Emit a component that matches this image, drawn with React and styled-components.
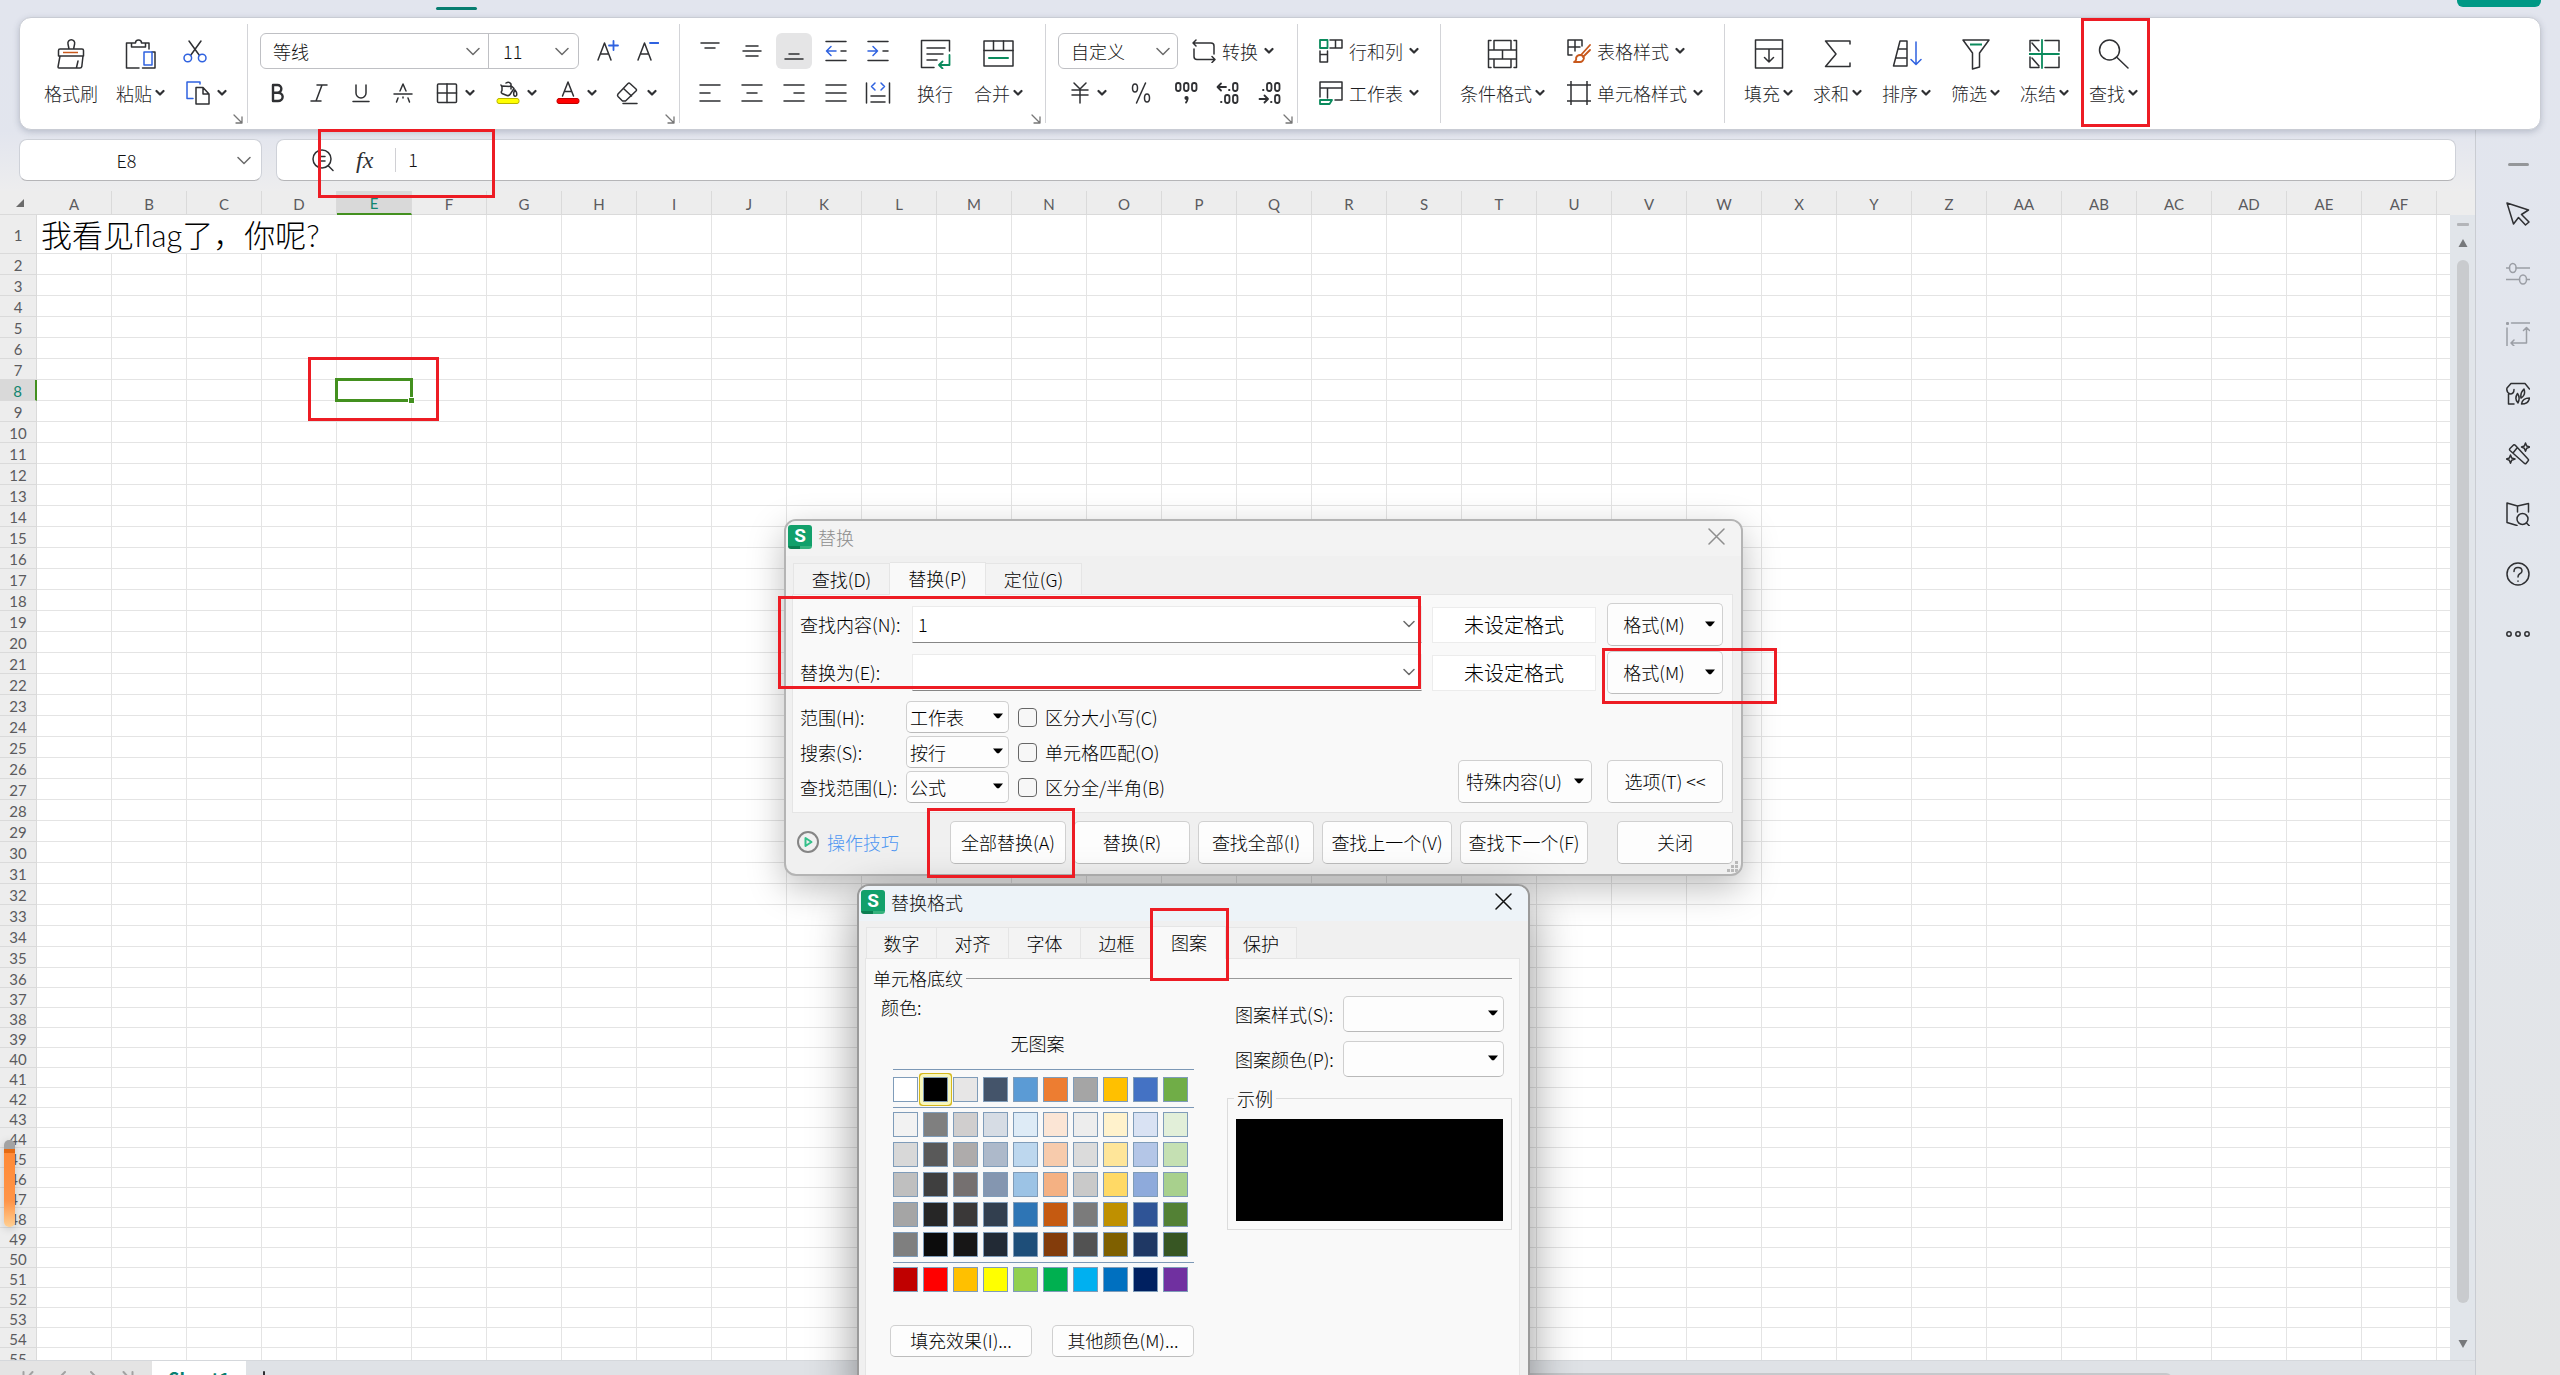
import React from "react";
import styled, { createGlobalStyle, css } from "styled-components";

const INK = "#2f3033";
const BLUE = "#2f62e0";
const GREEN = "#0a8a5c";
const ORANGE = "#c8581c";
const UI_FONT = '"Noto Sans CJK SC", "Noto Sans", sans-serif';
const SHEET_FONT = 'Lato, "Noto Sans CJK SC", sans-serif';

const GlobalStyle = createGlobalStyle`
  *, *::before, *::after { box-sizing: border-box; }
  body { margin: 0; font-family: ${UI_FONT}; font-size: 18px; font-weight: 300; line-height: 24px; color: #111; }
  button, input, select { font: inherit; color: inherit; margin: 0; padding: 0; }
  button { border: 0; background: none; }
  svg { display: block; flex: none; }
`;

/* ---------- icons ---------- */

const Svg = ({ w, h, children, stroke = INK, sw = 1.5 }) => (
  <svg width={w} height={h} viewBox={`0 0 ${w} ${h}`} fill="none" stroke={stroke} strokeWidth={sw} strokeLinecap="round" strokeLinejoin="round" aria-hidden="true">
    {children}
  </svg>
);

const Caret = () => (
  <Svg w={10} h={8} sw={2.2}><path d="M1.5 2 5 5.5 8.5 2" /></Svg>
);
const Chevron = ({ w = 14, h = 9 }) => (
  <Svg w={w} h={h} stroke="#6b6b6b"><path d={`M1 1.5 ${w / 2} ${h - 1.5} ${w - 1} 1.5`} /></Svg>
);
const Triangle = () => (
  <svg width="10" height="6" viewBox="0 0 10 6" aria-hidden="true"><path d="M0 0.5h10L6 5.2H4z" fill="#000" /></svg>
);
const CloseIcon = ({ color }) => (
  <Svg w={17} h={17} stroke={color}><path d="M1 1 16 16M16 1 1 16" /></Svg>
);

const icons = {
  brush: (
    <Svg w={28} h={30}>
      <path d="M12 10 11 5a3.4 3.4 0 1 1 6.6 0L16.6 10M3 10h22q1.500 0 1.500 1.500V17h-25v-5.500Q1.500 10 3 10ZM3 17 1 28q0 1 1 1h21q1.500 0 1.800-1.500L26 17M21 22l-1.500 6.500" />
      <path d="M6 13.500h15" stroke={ORANGE} strokeLinecap="butt" />
    </Svg>
  ),
  paste: (
    <Svg w={31} h={30}>
      <path d="M8 4H1.500v25H14M20 4h4v6M6.500 8V4h4a3 3 0 0 1 6 0h4v4zM17.500 29H30V13h-3" />
      <rect x="19" y="13" width="8" height="13" stroke={BLUE} />
    </Svg>
  ),
  cut: (
    <Svg w={24} h={24}>
      <path d="M6 2 16.500 16.500M18 2 7.500 16.500" />
      <circle cx="4.800" cy="19" r="3.800" stroke={BLUE} /><circle cx="19.200" cy="19" r="3.800" stroke={BLUE} />
    </Svg>
  ),
  copy: (
    <Svg w={24} h={24}>
      <path d="M14 3V1H1v16.500h6" stroke={BLUE} />
      <path d="M10 6.500h7L23 13v10H10zM17 6.500V13h6" />
    </Svg>
  ),
  fontUp: (
    <Svg w={22} h={22}><path d="M1 20 7.500 3 14 20M3.500 14h8" /><path d="M16.500 1v9M12 5.500h9" stroke={BLUE} strokeWidth="1.800" /></Svg>
  ),
  fontDown: (
    <Svg w={22} h={22}><path d="M1 20 7.500 3 14 20M3.500 14h8" /><path d="M13 3h8.500" stroke={BLUE} strokeWidth="1.800" /></Svg>
  ),
  bold: <Svg w={24} h={24} sw={2.4}><path d="M8 4v16h5a4.500 4 0 0 0 0-8.300H8h4.500a3.800 3.800 0 0 0 0-7.700z" /></Svg>,
  italic: <Svg w={24} h={24}><path d="M10 4h10M4 20h10M15 4 9 20" /></Svg>,
  underline: <Svg w={24} h={24}><path d="M7 4v8a5 5 0 0 0 10 0V4M4 20.500h16" /></Svg>,
  strike: <Svg w={24} h={24}><path d="m9 10 3-7 3 7M3 13h18M7 17l-1.500 4M17 17l1.500 4M12 16v1" /></Svg>,
  borders: <Svg w={22} h={22}><rect x="1.500" y="2" width="19" height="18.500" rx="1" /><path d="M11 2v18.500M1.500 11h19" /></Svg>,
  fill: (
    <Svg w={24} h={24}>
      <path d="M10 2q3-2 5 1v5M6 5l10 .500 2 2-4 6q-1 1.500-3 1l-5-2q-1.500-1 0-3zM6 6l-1-2M19 9q2.500 3 1.500 5.500-1.500 1.500-2.500 0Q17 12 19 9" />
      <rect x="1" y="17.500" width="22" height="5" rx="2" fill="#ffff00" stroke="#b9b400" strokeWidth="1" />
    </Svg>
  ),
  fontColor: (
    <Svg w={24} h={24}><path d="M6.500 15 12 1l5.500 14M8.500 10.500h7" /><rect x="1" y="17.500" width="22" height="5" rx="2" fill="#ff0000" stroke="#c00000" strokeWidth="1" /></Svg>
  ),
  eraser: <Svg w={24} h={24}><path d="M2 13 12 2.500q1-1 2 0L20 8q1 1 0 2L9.500 20h-3L2 15.500q-1-1.200 0-2.500ZM7.500 7.500l8 7.500M7 22.500h14" /></Svg>,
  alignTop: <Svg w={22} h={24}><path d="M2 4h18M6 9h10" /></Svg>,
  alignMid: <Svg w={22} h={24}><path d="M5 7h12M2 12h18M5 17h12" /></Svg>,
  alignBot: <Svg w={22} h={24}><path d="M6 15h10M2 20h18" /></Svg>,
  outdent: <Svg w={22} h={24}><path d="M1 2.500h20M1 21.500h20M16 12h5" /><path d="M11 12H1.500M6 7.500 1.500 12 6 16.500" stroke={BLUE} /></Svg>,
  indent: <Svg w={22} h={24}><path d="M1 2.500h20M1 21.500h20M16 12h5" /><path d="M1 12h9.500M6 7.500l4.500 4.500L6 16.500" stroke={BLUE} /></Svg>,
  left: <Svg w={22} h={24}><path d="M1 4h20M1 12h10M1 20h20" /></Svg>,
  center: <Svg w={22} h={24}><path d="M1 4h20M6 12h10M1 20h20" /></Svg>,
  right: <Svg w={22} h={24}><path d="M1 4h20M11 12h10M1 20h20" /></Svg>,
  justify: <Svg w={22} h={24}><path d="M1 4h20M1 12h20M1 20h20" /></Svg>,
  spread: <Svg w={26} h={24}><path d="M1.500 2v20M24.500 2v20M6 15h14M6 21h14" /><path d="M10 2 6.500 5.500 10 9M16 2l3.500 3.500L16 9" stroke={BLUE} /></Svg>,
  wrap: (
    <Svg w={31} h={30}>
      <path d="M14 28.500H1.500v-27h28V12M7 9h18M7 15h16M7 21h10" />
      <path d="M29.500 16v10H19M22.500 22.500 19 26l3.500 3.500" stroke={GREEN} strokeWidth="1.800" />
    </Svg>
  ),
  merge: <Svg w={31} h={30}><rect x="1" y="2" width="29" height="25" /><path d="M1 11.500h29M10.500 2v9.500M20.500 2v9.500" /><path d="M6 19h19" stroke={GREEN} strokeWidth="2" /></Svg>,
  convert: <Svg w={24} h={24}><path d="M1 4h18q3 0 3 3v8M4 1 1 4l3 3M22.500 20.500H5q-3 0-3-3V10M20 17.500l3 3-3 3" /></Svg>,
  yen: <Svg w={20} h={24}><path d="M4 2l6 6 6-6M2 9h16M2 14h16M10 8v14" /></Svg>,
  percent: <Svg w={20} h={24}><ellipse cx="4" cy="7" rx="2.500" ry="4" /><ellipse cx="16" cy="17" rx="2.500" ry="4" /><path d="M14.500 2 5.500 22" /></Svg>,
  thousands: (
    <Svg w={24} h={24} sw={1.8}>{[4, 12, 20].map((x) => <rect key={x} x={x - 2} y="2" width="4.500" height="8" rx="2.200" />)}<circle cx="12.500" cy="17" r="1.200" fill={INK} /><path d="M13.500 18q0 2-1.500 3.500" /></Svg>
  ),
  decInc: (
    <Svg w={24} h={24} sw={1.8}><path d="M10 6H2M5 2.500 1.500 6 5 9.500M13 9h.500M5 21h.500" /><rect x="17" y="2" width="4.500" height="8" rx="2.200" /><rect x="9" y="14" width="4.500" height="8" rx="2.200" /><rect x="17" y="14" width="4.500" height="8" rx="2.200" /></Svg>
  ),
  decDec: (
    <Svg w={24} h={24} sw={1.8}><path d="M1.500 18h8M6.500 14.500 10 18l-3.500 3.500M13 21h.500M5 9h.500" /><rect x="9" y="2" width="4.500" height="8" rx="2.200" /><rect x="17" y="2" width="4.500" height="8" rx="2.200" /><rect x="17" y="14" width="4.500" height="8" rx="2.200" /></Svg>
  ),
  rowCol: <Svg w={24} h={24}><rect x="1" y="1" width="7.500" height="8" stroke={GREEN} strokeWidth="1.800" /><path d="M11 1h12v8H11M16.500 1v8M1 12v11h7.500V12M1 15.500h7.500" /></Svg>,
  sheet: <Svg w={24} h={24}><path d="M1 16V1h22v18h-7M1 7h22M8.500 7v10" /><path d="M1 19h12l-2.500 4H1z" stroke={GREEN} strokeWidth="1.800" /></Svg>,
  condFmt: <Svg w={31} h={30}><path d="M4 1.500H1.500v27H4M27 1.500h2.500v27H27M1.500 11H29M1.500 20H29M7 1.500h17V11H7zM7 20h17v8.500H7zM15.500 11v9" /></Svg>,
  tableStyle: (
    <Svg w={24} h={24}><path d="M5 16H1V1h14v6M1 8h12M8 1v11" /><path d="M23 6 14 16M23 11l-7 7M13 16q3 0 4 3-1 4-4 4H7q3-1.500 2-4 1-3 4-3Z" stroke={ORANGE} strokeWidth="1.800" /></Svg>
  ),
  cellStyle: <Svg w={24} h={24}><path d="M4 0v24M20 0v24M0 4h24M0 20h24" /></Svg>,
  fillDown: <Svg w={30} h={30}><path d="M1.500 1h27v9h-27zM10 10H1.500v19h27V10H20M15 10v13M10.500 18.500 15 23l4.500-4.500" /></Svg>,
  sum: <Svg w={28} h={30}><path d="M26 5V2H1.500L12 15 1.500 27.500H26V24" /></Svg>,
  sort: <Svg w={30} h={30}><path d="M8 2h7v25H1.500zM6.500 10H15M4.500 19H15" /><path d="M24 3v22M19 20.500l5 5 5-5" stroke={BLUE} /></Svg>,
  filter: <Svg w={28} h={32}><path d="M1 2h26L17.500 15v14L10.500 31V15z" /><path d="M8 6.500h12" stroke={GREEN} strokeWidth="2" strokeLinecap="butt" /></Svg>,
  freeze: <Svg w={31} h={30}><path d="M10 1.500H1V12M16 1.500h14V12M1 18v10.500h9M30 18v10.500H16M3 4l7 8M3 19l7 8" /><path d="M13 1v28M0 15h30" stroke={GREEN} strokeWidth="1.800" /></Svg>,
  find: <Svg w={31} h={30}><circle cx="11.500" cy="11" r="10" /><path d="M18.500 18 30 29" /></Svg>,
  zoom: <Svg w={22} h={24}><circle cx="10" cy="11" r="9" /><path d="M7 8.500h6M7 13h6M16.500 18l4.500 4.500" /></Svg>,
};

const sideIcons = [
  ["选择", <Svg w={24} h={24}><path d="M1 1 22.500 8 15.500 12.500 23 20l-3.500 3-7-7.500L7.500 22z" /></Svg>],
  ["属性", <Svg w={24} h={24} stroke="#9b9ea5"><path d="M0 6h3.500M10 6h14M0 17.500h13.500M20.500 17.500H24" /><ellipse cx="6.800" cy="6" rx="3.300" ry="4.500" /><ellipse cx="17" cy="17.500" rx="3.500" ry="4.500" /></Svg>],
  ["转换", <Svg w={24} h={24} stroke="#9b9ea5"><path d="M5.500 1H24M1 6v18M20.500 6v15H5.500M17.500 8.500 20.500 5.500l3 3M8 18l-3 3 3 3" /><path d="M1 1h1v1H1z" strokeWidth="2" /></Svg>],
  ["美化", <Svg w={24} h={24}><path d="M8 22H2.500V12M8 7.500Q8 12 4 12 0 10 1 6l4-4.500h14L23.500 7M12 21q-4-4-.500-9.500 3 4 .500 9.500ZM15 16q-1-5 3-9 2 6-3 9ZM15.500 22q1-6 8-6-1 6-8 6Z" /></Svg>],
  ["魔法棒", <Svg w={24} h={24}><path d="M4 6.500 7.500 3q1-.500 2 .500L22 17q1 1 0 2l-2 2.500q-1 .500-2-.500L4 8.500q-1-1 0-2ZM7 11l4-5M19.500 1l1.200 3L24 5l-3.300 1.200-1.200 3-1.200-3L15.500 5l2.800-1zM4.500 13l1.200 3L9 17l-3.300 1.200-1.200 3-1.200-3L.500 17l2.800-1z" /></Svg>],
  ["查阅", <Svg w={24} h={24}><path d="M22.500 10V1.500L11.500 4 1 1v19.500l10 3M11.500 4v6" /><circle cx="16.500" cy="17" r="5.500" /><path d="m20.500 21 3 3" /></Svg>],
  ["帮助", <Svg w={24} h={24}><circle cx="12" cy="12" r="11" /><path d="M8 9.500q0-4 4-4t4 3.500q0 2-2.500 3-1.500.800-1.500 3M12 19v.300" /></Svg>],
  ["更多", <Svg w={24} h={24}><circle cx="3" cy="12" r="2.200" /><circle cx="12" cy="12" r="2.200" /><circle cx="21" cy="12" r="2.200" /></Svg>],
];

/* ---------- shell ---------- */

const Page = styled.div`
  position: relative;
  height: 100vh;
  display: flex;
  flex-direction: column;
  overflow: hidden;
  background: linear-gradient(#e2e5ee, #e2e6ec 50%, #e3e4e5);
`;

const MenuStrip = styled.div`
  display: flex;
  justify-content: space-between;
  align-items: flex-start;
  height: 17px;
  padding: 0 19px;
`;
const TabMark = styled.span`
  width: 41px;
  height: 3px;
  margin: 7px 0 0 417px;
  border-radius: 2px;
  background: #077d70;
`;
const ShareStub = styled.button`
  width: 84px;
  height: 7px;
  border-radius: 0 0 6px 6px;
  background: #009885;
`;

const Ribbon = styled.div`
  position: relative;
  z-index: 1;
  display: flex;
  height: 113px;
  margin: 0 19px;
  padding: 6px 0;
  border: 1px solid #c9ccd4;
  border-radius: 12px;
  background: #fff;
  box-shadow: 0 2px 6px rgba(60, 70, 100, 0.25);
`;
const Group = styled.section`
  position: relative;
  display: flex;
  gap: ${(p) => p.$gap ?? 18}px;
  padding: 9px 20px 0 ${(p) => p.$pad ?? 12}px;
  ${(p) => p.$w && css`width: ${p.$w}px; border-right: 1px solid #d3d4d8;`}
`;
const Lines = styled.div`
  display: flex;
  flex-direction: column;
  gap: 6px;
`;
const Line = styled.div`
  display: flex;
  align-items: center;
  height: 36px;
  gap: ${(p) => p.$gap ?? 0}px;
  padding-left: ${(p) => p.$pad ?? 0}px;
`;
const BigButton = styled.button`
  display: flex;
  flex-direction: column;
  align-items: center;
  height: 78px;
  white-space: nowrap;
  color: #1d1d1f;
`;
const BigIcon = styled.span`
  display: flex;
  align-items: center;
  height: 42px;
`;
const BigLabel = styled.span`
  display: flex;
  align-items: center;
  gap: 3px;
  height: 36px;
`;
const Tool = styled.button`
  display: flex;
  align-items: center;
  justify-content: ${(p) => (p.$w ? "center" : "flex-start")};
  gap: ${(p) => p.$gap ?? 6}px;
  height: 36px;
  ${(p) => p.$w && css`width: ${p.$w}px;`}
  border-radius: 6px;
  white-space: nowrap;
  color: #1d1d1f;
  background: ${(p) => (p.$on ? "#e5e5e6" : "transparent")};
`;
const Launcher = styled.button`
  position: absolute;
  right: 4px;
  bottom: -1px;
`;
const Combo = styled.div`
  display: flex;
  height: 36px;
  border: 1px solid #bfc0c4;
  border-radius: 6px;
  background: #fff;
`;
const PickWrap = styled.span`
  position: relative;
  display: flex;
  width: ${(p) => p.$w}px;
  height: ${(p) => p.$h ?? 34}px;
  & + & { border-left: 1px solid #bfc0c4; }
  & > svg { position: absolute; right: ${(p) => p.$r ?? 8}px; top: calc(50% - 4px); pointer-events: none; }
`;
const Pick = styled.select`
  appearance: none;
  width: 100%;
  padding: 0 ${(p) => p.$pad ?? 12}px;
  border: ${(p) => (p.$boxed ? "1px solid #cfcfcf" : "0")};
  border-bottom-color: #b9b9b9;
  border-radius: 5px;
  background: ${(p) => (p.$boxed ? "#fdfdfd" : "transparent")};
  font-family: ${UI_FONT};
`;

const Big = ({ icon, label, caret = true }) => (
  <BigButton type="button"><BigIcon>{icons[icon]}</BigIcon><BigLabel>{label}{caret && <Caret />}</BigLabel></BigButton>
);
const LauncherIcon = () => (
  <Launcher type="button" aria-label="更多设置"><Svg w={10} h={10} stroke="#777" sw={1.3}><path d="M1 1l8 8M9 3v6H3" /></Svg></Launcher>
);

/* ---------- work area ---------- */

const Work = styled.div`
  display: flex;
  flex: 1;
  min-height: 0;
`;
const Main = styled.div`
  display: flex;
  flex-direction: column;
  flex: 1;
  min-width: 0;
`;
const FormulaRow = styled.div`
  display: flex;
  gap: 14px;
  padding: 9px 19px 10px;
  background: linear-gradient(#e2e5ee, #ededee);
`;
const Field = styled.div`
  display: flex;
  align-items: center;
  height: 42px;
  border: 1px solid #ced1d8;
  border-bottom-color: #b5b5b8;
  border-radius: 8px;
  background: #fff;
  ${(p) => (p.$w ? css`width: ${p.$w}px; flex: none; padding-right: 10px;` : css`flex: 1; padding-left: 35px; gap: 22px;`)}
`;
const NameInput = styled.input`
  flex: 1;
  min-width: 0;
  padding-right: 4px;
  border: 0;
  background: none;
  text-align: center;
`;
const Fx = styled.span`
  font: italic 24px/24px "Liberation Serif", serif;
  color: ${INK};
`;
const FormulaInput = styled.input`
  flex: 1;
  height: 24px;
  padding: 0 0 2px 12px;
  border: 0;
  border-left: 1px solid #d0d0d4;
`;
const SheetArea = styled.div`
  display: flex;
  flex: 1;
  min-height: 0;
  background: #ededed;
`;
const GridClip = styled.div`
  flex: 1;
  min-width: 0;
  overflow: hidden;
`;
const Grid = styled.table`
  table-layout: fixed;
  width: 2512px;
  border-collapse: separate;
  border-spacing: 0;
  font: 15px/16px ${SHEET_FONT};
`;
const HeadCell = styled.th`
  padding: 2px 0 0;
  font-weight: 400;
  color: ${(p) => (p.$on ? "#12866f" : "#5b5b5e")};
  background: ${(p) => (p.$on ? "#d9d9d9" : "#ededed")};
  border: 0 solid #dadada;
  border-width: 0 1px 1px 0;
  ${(p) => p.$on && (p.scope === "col" ? css`border-bottom: 2px solid #43901f;` : css`border-right: 2px solid #43901f;`)}
`;
const Corner = styled.th`
  padding: 0 0 0 16px;
  border: 0 solid #dadada;
  border-width: 0 0 1px 0;
`;
const Cell = styled.td`
  position: relative;
  padding: 0;
  background: #fff;
  border: 0 solid #e4e4e4;
  border-width: 0 1px 1px 0;
`;
const TitleCell = styled(Cell)`
  padding: 2px 0 0 4px;
  font-size: 31px;
  font-weight: 300;
  line-height: 36px;
  white-space: nowrap;
  color: #000;
`;
const Selection = styled.span`
  position: absolute;
  z-index: 1;
  inset: -2px;
  border: 3px solid #43901f;
  &::after {
    content: "";
    position: absolute;
    right: -4px;
    bottom: -4px;
    width: 5px;
    height: 5px;
    background: #43901f;
    box-shadow: 0 0 0 1px #fff;
  }
`;
const ScrollTrack = styled.div`
  display: flex;
  flex-direction: column;
  align-items: center;
  width: 25px;
  margin-top: 24px;
  padding: 8px 0 12px;
  gap: 13px;
  background: #e1e5ea;
`;
const SplitBar = styled.span`
  width: 12px;
  height: 3px;
  border-radius: 1px;
  background: #b3b5b9;
`;
const Thumb = styled.span`
  width: 12px;
  flex: 1;
  margin-bottom: 24px;
  border-radius: 6px;
  background: #c9cbce;
`;
const SheetBar = styled.footer`
  display: flex;
  flex: none;
  height: 15px;
  overflow: hidden;
  border-top: 1px solid #d5d8dc;
  background: #dfe2e6;
`;
const SheetNav = styled.div`
  display: flex;
  justify-content: space-between;
  width: 152px;
  padding: 10px 18px 0 22px;
  background: #e4e4e4;
`;
const SheetTab = styled.button`
  display: flex;
  align-items: flex-start;
  justify-content: center;
  width: 94px;
  height: 36px;
  padding-top: 5px;
  font: 700 18px/24px ${UI_FONT};
  color: #0a8070;
  background: #fff;
`;
const AddSheet = styled.button`
  width: 36px;
  height: 36px;
  padding-top: 10px;
  display: flex;
  justify-content: center;
`;
const HScroll = styled.span`
  width: 660px;
  height: 12px;
  margin: 12px 303px 0 auto;
  border-radius: 6px;
  background: #c6c8cb;
`;
const SidePanel = styled.aside`
  display: flex;
  flex-direction: column;
  align-items: center;
  gap: 36px;
  flex: none;
  width: 85px;
  padding-top: 33px;
  border-left: 1px solid #c9ccd2;
`;
const CollapseBar = styled.button`
  width: 21px;
  height: 3px;
  border-radius: 2px;
  background: #949699;
`;

/* ---------- windows ---------- */

const Window = styled.section`
  position: absolute;
  z-index: 2;
  left: ${(p) => p.$x}px;
  top: ${(p) => p.$y}px;
  width: ${(p) => p.$w}px;
  border: 2px solid ${(p) => (p.$active ? "#9a9a9a" : "#b4b4b4")};
  border-radius: 12px;
  overflow: hidden;
  background: #f0f0f0;
  box-shadow: ${(p) => (p.$active ? "0 16px 48px rgba(0,0,0,.42)" : "0 12px 36px rgba(0,0,0,.26)")};
`;
const TitleBar = styled.header`
  display: flex;
  align-items: center;
  gap: 6px;
  height: 35px;
  padding: 0 16px 4px 2px;
  color: ${(p) => (p.$active ? "#111" : "#8e8e8e")};
  background: ${(p) => (p.$active ? "#edf3f8" : "#f3f3f3")};
  & > button { margin-left: auto; }
`;
const Logo = styled.span`
  width: 24px;
  height: 24px;
  border-radius: 3px;
  background: linear-gradient(90deg, #0a7f52 50%, #35b27e 50%) bottom / 100% 3px no-repeat, #12a06b;
  color: #fff;
  font: 700 19px/22px Roboto, sans-serif;
  text-align: center;
`;
const Tabs = styled.div`
  display: flex;
  align-items: flex-end;
  height: ${(p) => p.$h}px;
  padding: 0 7px;
  position: relative;
`;
const Tab = styled.button`
  width: ${(p) => p.$w}px;
  height: 31px;
  border: 1px solid #e5e5e5;
  border-width: 1px 1px 0 0;
  background: #f3f3f3;
  color: #000;
  &:first-child { border-left-width: 1px; }
  ${(p) => p.$on && css`height: 33px; background: #f9f9f9; margin-bottom: -1px; padding-bottom: 3px; z-index: 1;`}
`;
const Panel = styled.div`
  margin: 0 8px 0 6px;
  border: 1px solid #e5e5e5;
  background: #f9f9f9;
  color: #000;
`;
const FindPanel = styled(Panel)`
  display: flex;
  flex-direction: column;
  gap: 5px;
  padding: 8px 9px 9px 7px;
`;
const FindRow = styled.div`
  display: flex;
  align-items: center;
  height: 43px;
`;
const FindLabel = styled.label`
  width: 112px;
  padding-bottom: 2px;
  white-space: nowrap;
`;
const InputWrap = styled.span`
  position: relative;
  flex: 1;
  & > svg { position: absolute; right: 7px; top: 14px; }
`;
const TextBox = styled.input`
  display: block;
  width: 100%;
  height: 37px;
  padding: 0 5px 2px;
  border: 1px solid #ebebeb;
  border-bottom-color: #868686;
  background: #fff;
`;
const FormatState = styled.output`
  width: 164px;
  height: 36px;
  margin: 0 11px 0 10px;
  border: 1px solid #ececec;
  background: #fff;
  font-size: 20px;
  line-height: 34px;
  text-align: center;
`;
const PushButton = styled.button`
  display: flex;
  align-items: center;
  justify-content: center;
  gap: ${(p) => p.$gap ?? 12}px;
  width: ${(p) => p.$w ?? 116}px;
  height: ${(p) => p.$h ?? 43}px;
  padding: 0 0 2px ${(p) => p.$pad ?? 0}px;
  border: 1px solid #d0d0d0;
  border-bottom-color: #bdbdbd;
  border-radius: 5px;
  background: #fdfdfd;
  white-space: nowrap;
  color: #000;
`;
const Options = styled.div`
  display: flex;
  align-items: flex-end;
  padding-top: 2px;
`;
const OptionGrid = styled.div`
  display: grid;
  grid-template-columns: 106px 103px auto;
  grid-auto-rows: 32px;
  row-gap: 3px;
  align-items: center;
  white-space: nowrap;
`;
const CheckLabel = styled.label`
  display: flex;
  align-items: center;
  gap: 8px;
  margin-left: 9px;
`;
const Check = styled.input`
  appearance: none;
  width: 19px;
  height: 19px;
  border: 1px solid #666;
  border-radius: 4px;
  background: #f7f7f7;
`;
const OptionButtons = styled.div`
  display: flex;
  gap: 15px;
  margin-left: auto;
`;
const Actions = styled.footer`
  display: flex;
  gap: 8px;
  align-items: center;
  padding: 8px 8px 10px 11px;
`;
const Tips = styled.a`
  display: flex;
  align-items: center;
  gap: 8px;
  width: 145px;
  padding-bottom: 2px;
  color: #4f97f2;
  text-decoration: none;
`;
const Spacer = styled.span`
  flex: 1;
`;
const Grip = styled.span`
  position: absolute;
  right: 3px;
  bottom: 2px;
`;

const FormatPanel = styled(Panel)`
  min-height: 440px;
  padding: 7px 7px 0;
`;
const SectionTitle = styled.div`
  display: flex;
  align-items: center;
  gap: 3px;
  &::after { content: ""; flex: 1; height: 1px; background: #9a9a9a; }
`;
const Columns = styled.div`
  display: flex;
  justify-content: space-between;
`;
const PaletteSide = styled.div`
  width: 321px;
  padding: 5px 0 0 8px;
`;
const NoPattern = styled.button`
  display: block;
  margin: 12px auto 14px;
  color: #000;
`;
const Palette = styled.div`
  display: flex;
  flex-direction: column;
  width: 301px;
  margin-left: 12px;
`;
const Band = styled.div`
  display: grid;
  grid-template-columns: repeat(10, 25px);
  gap: 5px;
  padding: ${(p) => p.$pad};
  border-top: 1px solid #7c98b6;
`;
const Swatch = styled.button`
  height: 25px;
  border: 1px solid #7f9cb9;
  background: ${(p) => p.$c};
  ${(p) => p.$on && css`outline: 3px solid #f7f7bd; box-shadow: 0 0 0 4px #d5b81b; border-radius: 1px;`}
`;
const PaletteActions = styled.div`
  display: flex;
  gap: 20px;
  margin: 33px 0 0 9px;
`;
const PatternSide = styled.div`
  width: 285px;
  padding-top: 6px;
`;
const PatternRow = styled.div`
  display: flex;
  align-items: center;
  justify-content: space-between;
  height: 36px;
  margin-bottom: 9px;
  padding: 0 8px;
`;
const Sample = styled.fieldset`
  margin: 0;
  padding: 9px 8px 8px;
  border: 1px solid #dcdcdc;
  legend { padding: 0 3px; margin-left: -2px; }
`;
const SampleFill = styled.div`
  height: 102px;
  background: #000;
`;

/* ---------- overlays ---------- */

const Mark = styled.span`
  position: absolute;
  z-index: 3;
  left: ${(p) => p.$b[0]}px;
  top: ${(p) => p.$b[1]}px;
  width: ${(p) => p.$b[2]}px;
  height: ${(p) => p.$b[3]}px;
  border: 3px solid #ed1c24;
  pointer-events: none;
`;
const DockPill = styled.span`
  position: absolute;
  z-index: 3;
  left: 4px;
  top: 1140px;
  width: 11px;
  height: 87px;
  border-radius: 5px;
  background: linear-gradient(#a3a3a3 9px, #e56a12 9px, #e56a12 13px, #ff8a36 13px, #ff9448 70%, #ffcf92);
  box-shadow: 0 2px 8px rgba(0, 0, 0, 0.16);
`;

/* ---------- data ---------- */

const columnName = (i) => (i < 26 ? String.fromCharCode(65 + i) : "A" + String.fromCharCode(39 + i));
const columns = Array.from({ length: 32 }, (_, i) => columnName(i));
const rows = Array.from({ length: 55 }, (_, i) => i + 1);
const rowHeight = (n) => (n === 1 ? 39 : n <= 35 ? 21 : 20);

const baseColors = ["#ffffff", "#000000", "#e7e6e6", "#44546a", "#5b9bd5", "#ed7d31", "#a5a5a5", "#ffc000", "#4472c4", "#70ad47"];
const shades = [
  "#f2f2f2", "#7f7f7f", "#d0cece", "#d6dce4", "#deebf6", "#fbe5d5", "#ededed", "#fff2cc", "#d9e2f3", "#e2efd9",
  "#d8d8d8", "#595959", "#aeabab", "#adb9ca", "#bdd7ee", "#f7cbac", "#dbdbdb", "#fee599", "#b4c6e7", "#c5e0b3",
  "#bfbfbf", "#3f3f3f", "#757070", "#8496b0", "#9cc3e5", "#f4b183", "#c9c9c9", "#ffd965", "#8eaadb", "#a8d08d",
  "#a5a5a5", "#262626", "#3a3838", "#323f4f", "#2e75b5", "#c55a11", "#7b7b7b", "#bf9000", "#2f5496", "#538135",
  "#7f7f7f", "#0c0c0c", "#171616", "#222a35", "#1e4e79", "#833c0b", "#525252", "#7f6000", "#1f3864", "#375623",
];
const standard = ["#c00000", "#ff0000", "#ffc000", "#ffff00", "#92d050", "#00b050", "#00b0f0", "#0070c0", "#002060", "#7030a0"];

const marks = [
  [2081, 18, 69, 109], [318, 129, 177, 69], [308, 357, 131, 64], [778, 596, 643, 93],
  [1602, 648, 175, 56], [927, 808, 148, 70], [1150, 908, 79, 73],
];

const IconTool = ({ name, label, w, on, caret }) => (
  <Tool type="button" aria-label={label} $w={w} $on={on} $gap={7}>{icons[name]}{caret && <Caret />}</Tool>
);

function Toolbar() {
  return (
    <Ribbon role="toolbar">
      <Group $w={228} $pad={24}>
        <Big icon="brush" label="格式刷" caret={false} />
        <Big icon="paste" label="粘贴" />
        <Lines>
          <Line><IconTool name="cut" label="剪切" /></Line>
          <Line $pad={3}><IconTool name="copy" label="复制" caret /></Line>
        </Lines>
        <LauncherIcon />
      </Group>
      <Group $w={432}>
        <Lines>
          <Line $gap={18}>
            <Combo>
              <PickWrap $w={227}><Pick aria-label="字体"><option>等线</option></Pick><Chevron /></PickWrap>
              <PickWrap $w={90} $r={9}><Pick aria-label="字号" $pad={14}><option>11</option></Pick><Chevron /></PickWrap>
            </Combo>
            <IconTool name="fontUp" label="增大字号" />
            <IconTool name="fontDown" label="减小字号" />
          </Line>
          <Line $gap={18} $pad={5}>
            <IconTool name="bold" label="加粗" w={24} />
            <IconTool name="italic" label="倾斜" w={24} />
            <IconTool name="underline" label="下划线" w={24} />
            <IconTool name="strike" label="删除线" w={24} />
            <IconTool name="borders" label="边框" w={44} caret />
            <IconTool name="fill" label="填充颜色" w={42} caret />
            <IconTool name="fontColor" label="字体颜色" w={42} caret />
            <IconTool name="eraser" label="清除" w={42} caret />
          </Line>
        </Lines>
        <LauncherIcon />
      </Group>
      <Group $w={366} $gap={21}>
        <Lines>
          <Line $gap={6}>
            <IconTool name="alignTop" label="顶端对齐" w={36} />
            <IconTool name="alignMid" label="垂直居中" w={36} />
            <IconTool name="alignBot" label="底端对齐" w={36} on />
            <IconTool name="outdent" label="减少缩进" w={36} />
            <IconTool name="indent" label="增加缩进" w={36} />
          </Line>
          <Line $gap={6}>
            <IconTool name="left" label="左对齐" w={36} />
            <IconTool name="center" label="居中" w={36} />
            <IconTool name="right" label="右对齐" w={36} />
            <IconTool name="justify" label="两端对齐" w={36} />
            <IconTool name="spread" label="分散对齐" w={36} />
          </Line>
        </Lines>
        <Big icon="wrap" label="换行" caret={false} />
        <Big icon="merge" label="合并" />
        <LauncherIcon />
      </Group>
      <Group $w={252}>
        <Lines>
          <Line $gap={14}>
            <Combo><PickWrap $w={118} $r={7}><Pick aria-label="数字格式"><option>自定义</option></Pick><Chevron /></PickWrap></Combo>
            <Tool type="button">{icons.convert}转换<Caret /></Tool>
          </Line>
          <Line $gap={18} $pad={10}>
            <IconTool name="yen" label="货币" w={40} caret />
            <IconTool name="percent" label="百分比" w={30} />
            <IconTool name="thousands" label="千位分隔" w={24} />
            <IconTool name="decInc" label="增加小数位" w={24} />
            <IconTool name="decDec" label="减少小数位" w={24} />
          </Line>
        </Lines>
        <LauncherIcon />
      </Group>
      <Group $w={143} $pad={21}>
        <Lines>
          <Tool type="button">{icons.rowCol}行和列<Caret /></Tool>
          <Tool type="button">{icons.sheet}工作表<Caret /></Tool>
        </Lines>
      </Group>
      <Group $w={284} $pad={19} $gap={22}>
        <Big icon="condFmt" label="条件格式" />
        <Lines>
          <Tool type="button">{icons.tableStyle}表格样式<Caret /></Tool>
          <Tool type="button">{icons.cellStyle}单元格样式<Caret /></Tool>
        </Lines>
      </Group>
      <Group $pad={19} $gap={20}>
        <Big icon="fillDown" label="填充" />
        <Big icon="sum" label="求和" />
        <Big icon="sort" label="排序" />
        <Big icon="filter" label="筛选" />
        <Big icon="freeze" label="冻结" />
        <Big icon="find" label="查找" />
      </Group>
    </Ribbon>
  );
}

function Spreadsheet() {
  return (
    <Grid>
      <colgroup>
        <col style={{ width: 37 }} />
        {columns.map((c) => <col key={c} style={{ width: 75 }} />)}
        <col style={{ width: 75 }} />
      </colgroup>
      <thead>
        <tr style={{ height: 24 }}>
          <Corner aria-label="全选"><svg width="8" height="8" viewBox="0 0 8 8"><path d="M8 0v8H0z" fill="#6b6b6b" /></svg></Corner>
          {columns.map((c) => <HeadCell key={c} scope="col" $on={c === "E"}>{c}</HeadCell>)}
          <HeadCell scope="col" />
        </tr>
      </thead>
      <tbody>
        {rows.map((n) => (
          <tr key={n} style={{ height: rowHeight(n) }}>
            <HeadCell scope="row" $on={n === 8}>{n}</HeadCell>
            {n === 1 && <TitleCell colSpan={5}>我看见flag了，你呢?</TitleCell>}
            {columns.slice(n === 1 ? 5 : 0).map((c) => (
              <Cell key={c}>{n === 8 && c === "E" && <Selection />}</Cell>
            ))}
            <Cell />
          </tr>
        ))}
      </tbody>
    </Grid>
  );
}

const FindLine = ({ id, label, value }) => (
  <FindRow>
    <FindLabel htmlFor={id}>{label}</FindLabel>
    <InputWrap><TextBox id={id} defaultValue={value} /><Chevron w={12} h={8} /></InputWrap>
    <FormatState>未设定格式</FormatState>
    <PushButton type="button" $gap={20} $pad={8}>格式(M)<Triangle /></PushButton>
  </FindRow>
);

const options = [
  ["scope", "范围(H):", "工作表", "区分大小写(C)"],
  ["order", "搜索(S):", "按行", "单元格匹配(O)"],
  ["lookin", "查找范围(L):", "公式", "区分全/半角(B)"],
];

function ReplaceWindow() {
  return (
    <Window $x={784} $y={519} $w={959} aria-label="替换">
      <TitleBar><Logo>S</Logo>替换<button type="button" aria-label="关闭窗口"><CloseIcon color="#8e8e8e" /></button></TitleBar>
      <Tabs $h={38}>
        <Tab type="button" $w={97}>查找(D)</Tab>
        <Tab type="button" $w={96} $on>替换(P)</Tab>
        <Tab type="button" $w={96}>定位(G)</Tab>
      </Tabs>
      <FindPanel>
        <FindLine id="find" label="查找内容(N):" value="1" />
        <FindLine id="replace" label="替换为(E):" value="" />
        <Options>
          <OptionGrid>
            {options.map(([id, label, value, check]) => (
              <React.Fragment key={id}>
                <label htmlFor={id}>{label}</label>
                <PickWrap $w={103} $h={32} $r={6}><Pick id={id} $boxed $pad={3}><option>{value}</option></Pick><Triangle /></PickWrap>
                <CheckLabel><Check type="checkbox" />{check}</CheckLabel>
              </React.Fragment>
            ))}
          </OptionGrid>
          <OptionButtons>
            <PushButton type="button" $w={134}>特殊内容(U)<Triangle /></PushButton>
            <PushButton type="button">选项(T) &lt;&lt;</PushButton>
          </OptionButtons>
        </Options>
      </FindPanel>
      <Actions>
        <Tips href="#tips">
          <Svg w={22} h={22} stroke="#858585" sw={2}><circle cx="11" cy="11" r="10" /><path d="M8.500 7v8l6-4z" stroke="#35c08a" /></Svg>
          操作技巧
        </Tips>
        <PushButton type="button">全部替换(A)</PushButton>
        <PushButton type="button">替换(R)</PushButton>
        <PushButton type="button">查找全部(I)</PushButton>
        <PushButton type="button" $w={130}>查找上一个(V)</PushButton>
        <PushButton type="button" $w={128}>查找下一个(F)</PushButton>
        <Spacer />
        <PushButton type="button">关闭</PushButton>
      </Actions>
      <Grip><svg width="11" height="11" viewBox="0 0 11 11" fill="#b9b9b9" aria-hidden="true"><path d="M8 0h3v3H8zM4 4h3v3H4zM8 4h3v3H8zM0 8h3v3H0zM4 8h3v3H4zM8 8h3v3H8z" /></svg></Grip>
    </Window>
  );
}

const Swatches = ({ colors, selected }) =>
  colors.map((c, i) => <Swatch key={i} type="button" aria-label={c} $c={c} $on={c === selected} />);

function FormatWindow() {
  return (
    <Window $x={857} $y={884} $w={673} $active aria-label="替换格式">
      <TitleBar $active><Logo>S</Logo>替换格式<button type="button" aria-label="关闭窗口"><CloseIcon color="#111" /></button></TitleBar>
      <Tabs $h={37}>
        <Tab type="button" $w={71}>数字</Tab>
        <Tab type="button" $w={72}>对齐</Tab>
        <Tab type="button" $w={72}>字体</Tab>
        <Tab type="button" $w={72}>边框</Tab>
        <Tab type="button" $w={73} $on>图案</Tab>
        <Tab type="button" $w={71}>保护</Tab>
      </Tabs>
      <FormatPanel>
        <SectionTitle>单元格底纹</SectionTitle>
        <Columns>
          <PaletteSide>
            颜色:
            <NoPattern type="button">无图案</NoPattern>
            <Palette>
              <Band $pad="7px 0 5px"><Swatches colors={baseColors} selected="#000000" /></Band>
              <Band $pad="4px 0 5px"><Swatches colors={shades} /></Band>
              <Band $pad="4px 0 0"><Swatches colors={standard} /></Band>
            </Palette>
            <PaletteActions>
              <PushButton type="button" $w={142} $h={32}>填充效果(I)...</PushButton>
              <PushButton type="button" $w={142} $h={32}>其他颜色(M)...</PushButton>
            </PaletteActions>
          </PaletteSide>
          <PatternSide>
            <PatternRow>
              <label htmlFor="pstyle">图案样式(S):</label>
              <PickWrap $w={161} $h={36} $r={6}><Pick id="pstyle" $boxed><option></option></Pick><Triangle /></PickWrap>
            </PatternRow>
            <PatternRow>
              <label htmlFor="pcolor">图案颜色(P):</label>
              <PickWrap $w={161} $h={36} $r={6}><Pick id="pcolor" $boxed><option></option></Pick><Triangle /></PickWrap>
            </PatternRow>
            <Sample><legend>示例</legend><SampleFill /></Sample>
          </PatternSide>
        </Columns>
      </FormatPanel>
    </Window>
  );
}

export default function App() {
  return (
    <Page>
      <GlobalStyle />
      <MenuStrip><TabMark /><ShareStub type="button" aria-label="分享" /></MenuStrip>
      <Toolbar />
      <Work>
        <Main>
          <FormulaRow>
            <Field $w={243}><NameInput aria-label="名称框" defaultValue="E8" /><Chevron /></Field>
            <Field>{icons.zoom}<Fx>fx</Fx><FormulaInput aria-label="编辑栏" defaultValue="1" /></Field>
          </FormulaRow>
          <SheetArea>
            <GridClip><Spreadsheet /></GridClip>
            <ScrollTrack>
              <SplitBar />
              <svg width="10" height="8" viewBox="0 0 10 8" aria-hidden="true"><path d="M5 0l4.500 8h-9z" fill="#77797c" /></svg>
              <Thumb />
              <svg width="10" height="8" viewBox="0 0 10 8" aria-hidden="true"><path d="M.500 0h9L5 8z" fill="#77797c" /></svg>
            </ScrollTrack>
          </SheetArea>
          <SheetBar>
            <SheetNav>
              <Svg w={12} h={14} stroke="#a2a2a2" sw={2}><path d="M1.500 1v12M10.500 1 5 7l5.500 6" /></Svg>
              <Svg w={8} h={14} stroke="#a2a2a2" sw={2}><path d="M7 1 1 7l6 6" /></Svg>
              <Svg w={8} h={14} stroke="#a2a2a2" sw={2}><path d="m1 1 6 6-6 6" /></Svg>
              <Svg w={12} h={14} stroke="#a2a2a2" sw={2}><path d="M10.500 1v12M1.500 1 7 7l-5.500 6" /></Svg>
            </SheetNav>
            <SheetTab type="button">Sheet1</SheetTab>
            <AddSheet type="button" aria-label="新建工作表"><Svg w={16} h={16} sw={2}><path d="M8 1v14M1 8h14" /></Svg></AddSheet>
            <HScroll />
          </SheetBar>
        </Main>
        <SidePanel>
          <CollapseBar type="button" aria-label="折叠" />
          {sideIcons.map(([label, icon]) => <button key={label} type="button" aria-label={label}>{icon}</button>)}
        </SidePanel>
      </Work>
      <ReplaceWindow />
      <FormatWindow />
      <DockPill />
      {marks.map((b) => <Mark key={b.join()} $b={b} />)}
    </Page>
  );
}
